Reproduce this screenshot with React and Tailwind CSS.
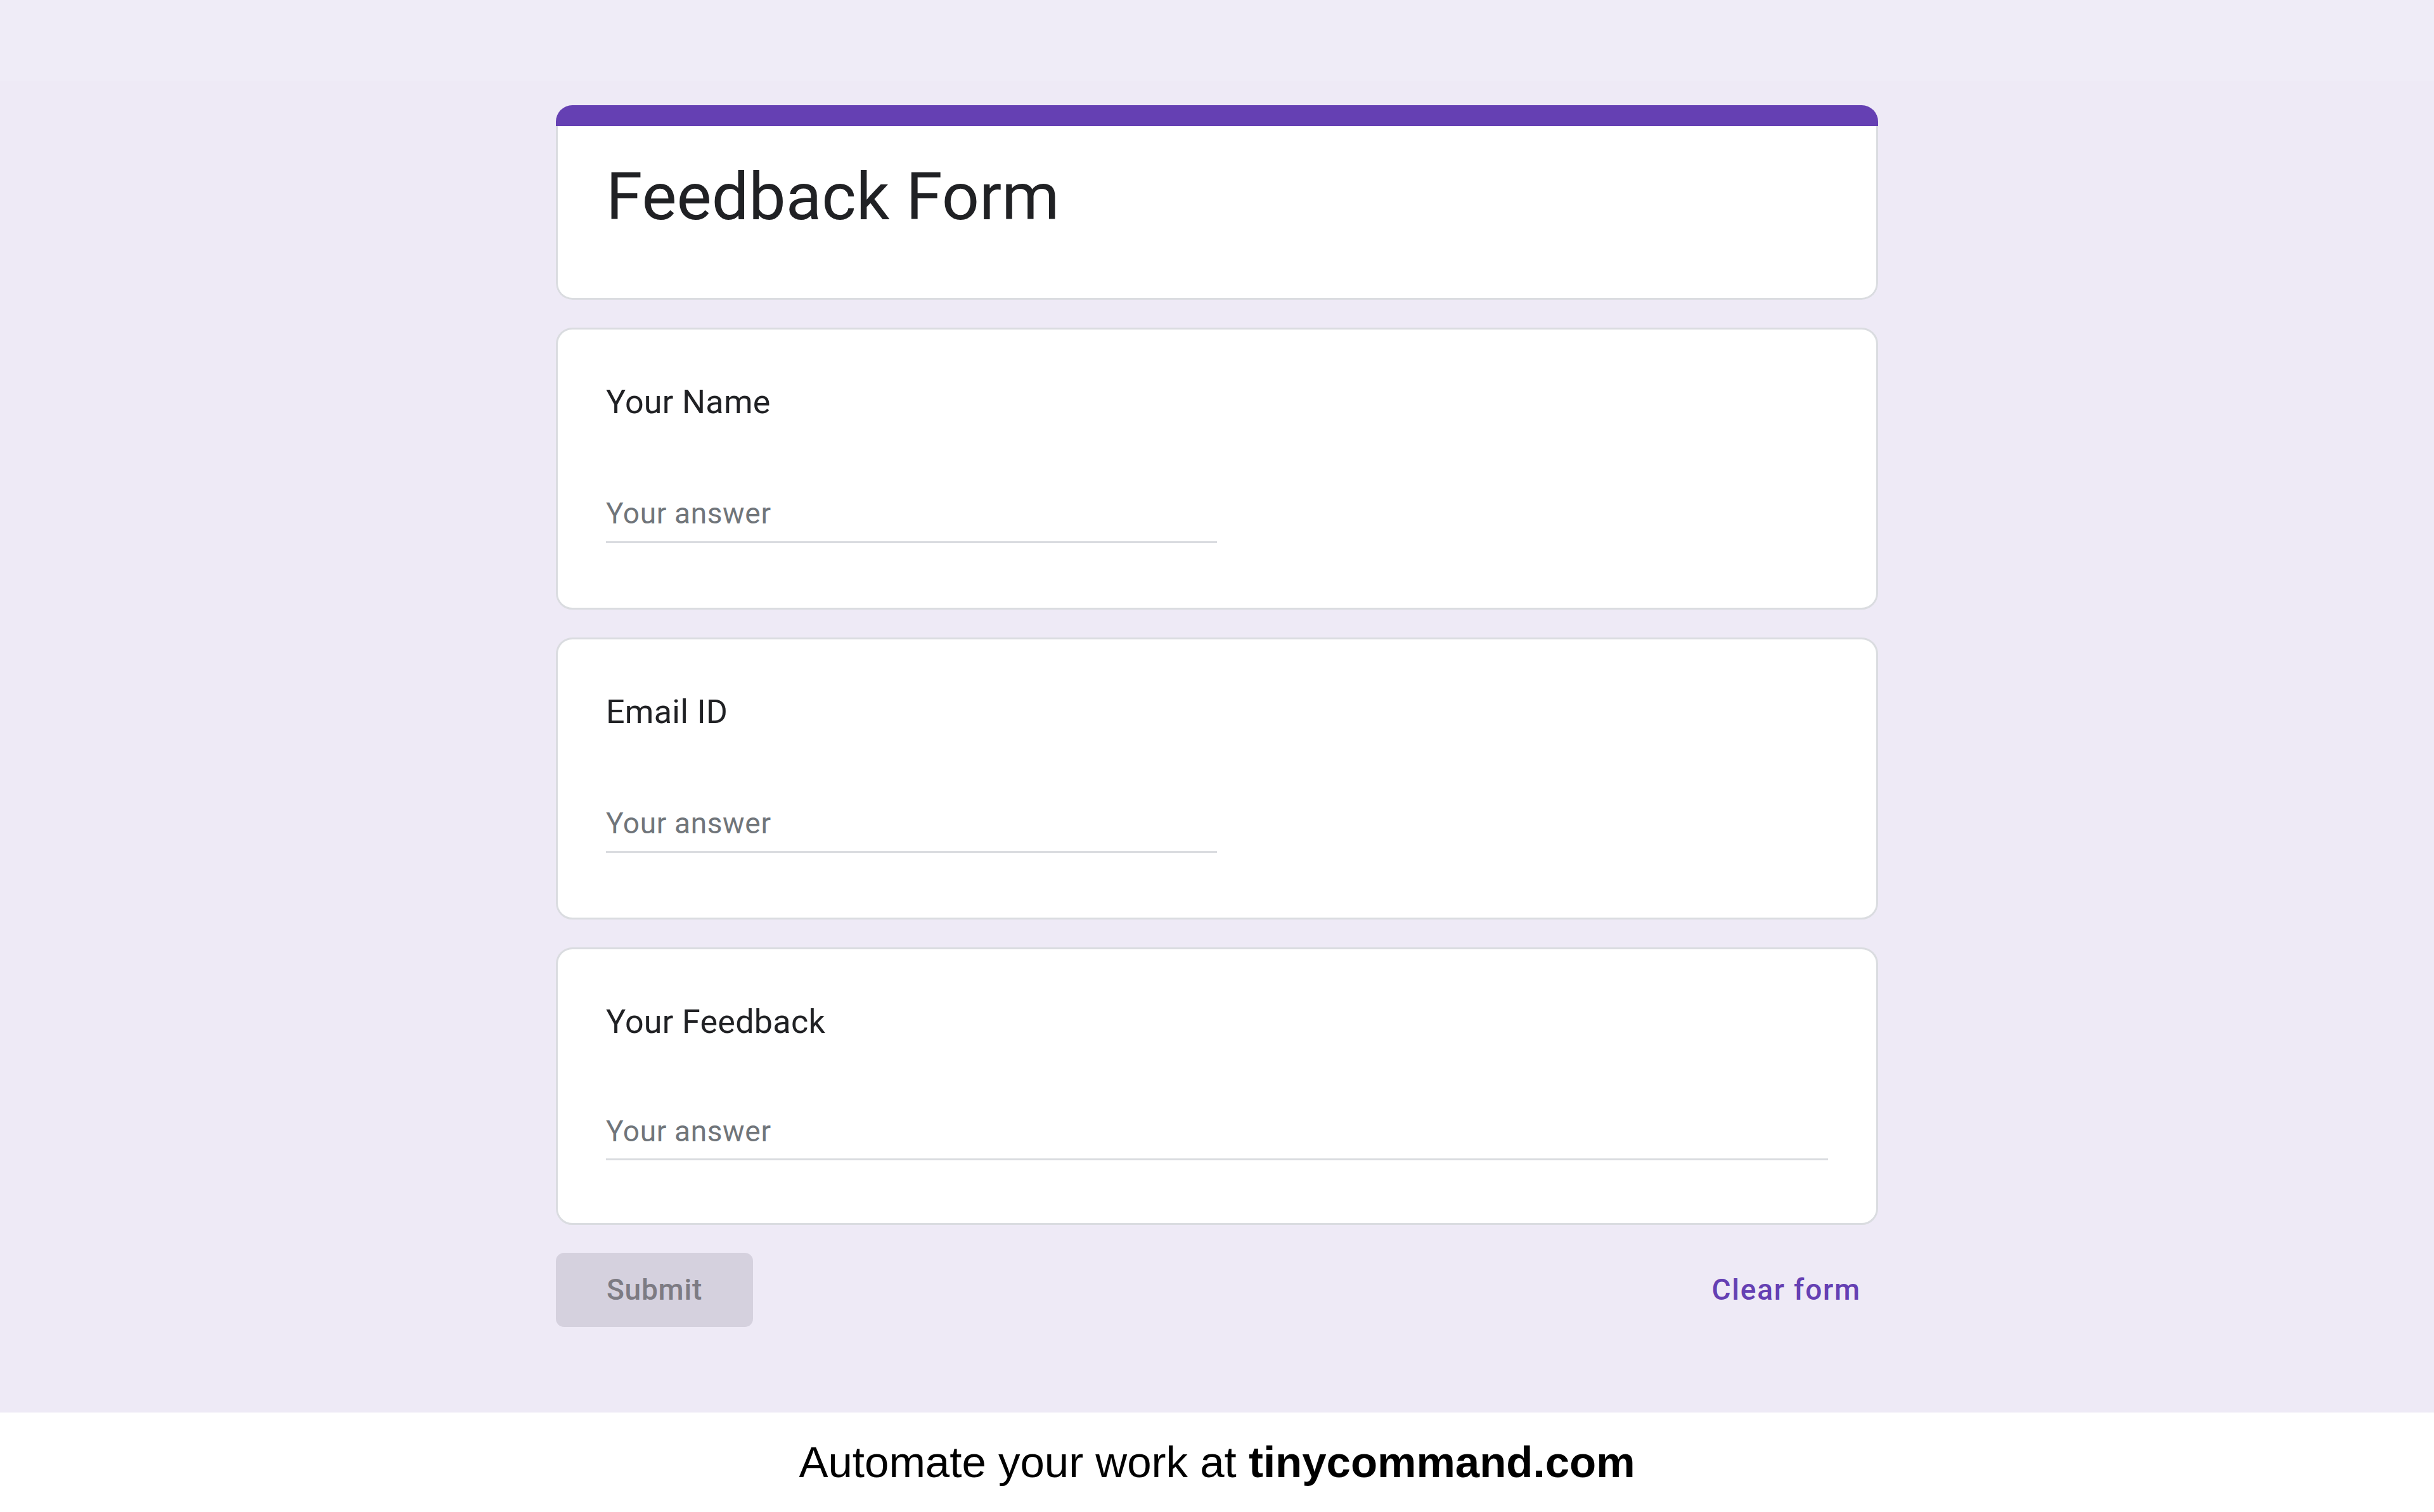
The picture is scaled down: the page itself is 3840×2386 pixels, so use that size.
const QuestionCard = ({ label, full = false, last = false }) => (
  <div
    className={`rounded-[26px] border-[3px] border-[#dadce0] bg-white px-[76px] pt-[76px] ${
      last ? 'h-[438px]' : 'h-[445px]'
    }`}
  >
    <div className="text-[52px] leading-[78px] tracking-[0.3px] text-[#202124]">{label}</div>
    <div
      className={`border-b-[3px] border-[#dadce0] text-[46px] leading-[60px] tracking-[0.65px] text-[#70757a] ${
        full ? 'w-full' : 'w-1/2'
      } ${last ? 'mt-[103px] pb-[13px]' : 'mt-[106px] pb-[14px]'}`}
    >
      Your answer
    </div>
  </div>
);

const App = () => {
  return (
    <div className="flex min-h-screen flex-col font-['Roboto','Liberation_Sans',sans-serif]">
      <main className="bg-[#eeeaf6] pb-[135px]">
        <div className="h-[128px] bg-[#efecf7]" />

        <div className="mx-auto flex w-[2086px] flex-col gap-[44px] pt-[38px]">
          {/* Header card */}
          <div className="overflow-hidden rounded-[26px]">
            <div className="h-[33px] bg-[#6540b3]" />
            <div className="h-[274px] rounded-b-[26px] border-x-[3px] border-b-[3px] border-[#dadce0] bg-white px-[76px] pt-[47px]">
              <h1 className="text-[104px] leading-[130px] font-normal text-[#202124]">Feedback Form</h1>
            </div>
          </div>

          <QuestionCard label="Your Name" />
          <QuestionCard label="Email ID" />
          <QuestionCard label="Your Feedback" full last />

          {/* Actions */}
          <div className="flex items-center justify-between">
            <button
              type="button"
              disabled
              className="flex h-[117px] w-[311px] items-center justify-center rounded-[13px] bg-[#d5d1de] text-[46px] font-medium tracking-[0.8px] text-[#7d7b83]"
            >
              Submit
            </button>
            <button
              type="button"
              className="mr-[27px] text-[46px] font-medium tracking-[1.8px] text-[#6540b3]"
            >
              Clear form
            </button>
          </div>
        </div>
      </main>

      <footer className="flex h-[157px] items-center justify-center bg-white font-['Liberation_Sans',Arial,sans-serif] text-[69px] text-black">
        <p>
          Automate your work at <span className="font-bold">tinycommand.com</span>
        </p>
      </footer>
    </div>
  );
};

export default App;
